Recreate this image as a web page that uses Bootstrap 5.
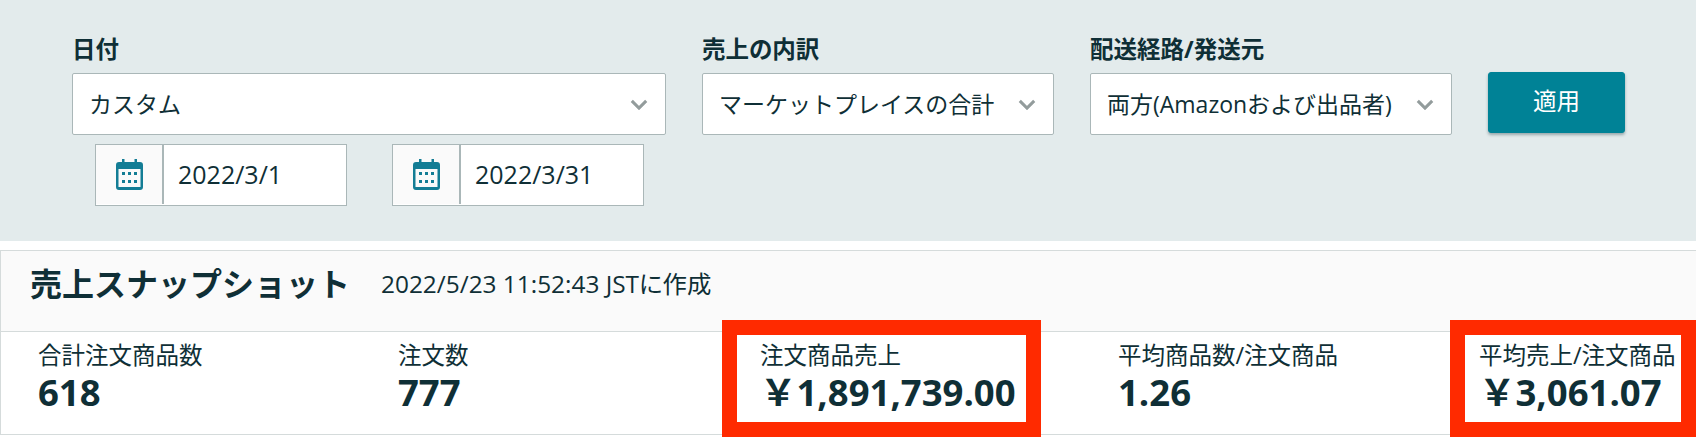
<!DOCTYPE html>
<html lang="ja">
<head>
<meta charset="utf-8">
<title>売上スナップショット</title>
<link href="https://cdn.jsdelivr.net/npm/bootstrap@5.3.0/dist/css/bootstrap.min.css" rel="stylesheet">
<style>
html,body{height:440px;overflow:hidden;background:#fff}
body{font-family:"Open Sans","Noto Sans CJK JP",sans-serif;color:#0f2f36;font-feature-settings:"palt"}
.filter-panel{height:241px;background:#e3ebec;padding:35px 0 0 72px;gap:36px}
.filter-label{display:block;font-size:23.5px;line-height:28px;font-weight:700;margin:0 0 10px;color:#0f2f36}
.filter-date{width:594px}
.filter-sales{width:352px}
.filter-route{width:362px}
.pick{height:62px;font-size:23px;line-height:28px;color:#0f2f36;border:1px solid #aab7b8;border-radius:2px;padding:16px 40px 16px 16px;background-color:#fff;background-size:18px 11px;background-position:right 17px center;background-image:url("data:image/svg+xml,%3Csvg xmlns='http://www.w3.org/2000/svg' viewBox='0 0 20 12'%3E%3Cpath d='M2 2l8 8 8-8' fill='none' stroke='%23939c9c' stroke-width='3.400'/%3E%3C/svg%3E");font-family:inherit;box-shadow:none;white-space:nowrap;overflow:hidden}
.date-row{margin-top:9px;padding-left:23px;gap:45px}
.date-box{height:62px;background:#fff;border:1px solid #aab7b8;flex-wrap:nowrap}
.date-a{width:252px}
.date-b{width:252px}
.date-icon{width:68px;background:#fafafa;border-right:2px solid #aab7b8;margin-bottom:1px}
.date-text{font-size:25px;padding-left:15px}
.apply-btn{width:137px;height:61px;margin-top:37px;margin-left:0;background:#008296;border:1px solid #008296;color:#fff;font-size:23.5px;border-radius:3px;padding-top:4px;box-shadow:0 2px 3px rgba(15,47,54,.35)}
.snap-card{margin-top:9px;height:185px;border:0;border-top:1px solid #d5dbdb;border-bottom:1px solid #d5dbdb;border-left:1px solid #d5dbdb;border-radius:0}
.snap-head{height:81px;background:#fafafa;border-bottom:1px solid #d5dbdb;padding:0 0 14px 29px;gap:31px}
.snap-title{font-size:32px;font-weight:700;margin:0;line-height:40px;color:#0f2f36;font-feature-settings:normal}
.snap-time{font-size:24.4px;line-height:30px}
.snap-stats{padding:7px 0 0 37px;display:grid;grid-template-columns:360px 362px 358px 361px 240px}
.stat-cell{position:relative}
.stat-name{font-size:23.5px;line-height:32px;white-space:nowrap}
.stat-num{font-size:36.5px;line-height:43px;font-weight:700;white-space:nowrap;font-feature-settings:normal}
.red-frame{position:absolute;border:15px solid #ff2a00;top:-19px}
.frame-a{left:-38px;width:319px;height:117px}
.frame-b{left:-29px;width:246px;height:117px}
</style>
</head>
<body>
<section class="filter-panel d-flex align-items-start">
  <div class="filter-date">
    <label class="filter-label">日付</label>
    <select class="form-select pick"><option>カスタム</option></select>
    <div class="d-flex date-row">
      <div class="input-group date-box date-a">
        <span class="date-icon d-flex align-items-center justify-content-center">
          <svg width="27" height="31" viewBox="0 0 27 31"><path fill="#137d95" fill-rule="evenodd" d="M6 0h2.500v3h10V0H21v3h3a3 3 0 0 1 3 3v22a3 3 0 0 1-3 3H3a3 3 0 0 1-3-3V6a3 3 0 0 1 3-3h3zM2.500 10v18h22V10z"/><path fill="#137d95" d="M6 13h3v3H6zm6 0h3v3h-3zm6 0h3v3h-3zM6 21h3v3H6zm6 0h3v3h-3zm6 0h3v3h-3z"/></svg>
        </span>
        <span class="date-text d-flex align-items-center">2022/3/1</span>
      </div>
      <div class="input-group date-box date-b">
        <span class="date-icon d-flex align-items-center justify-content-center">
          <svg width="27" height="31" viewBox="0 0 27 31"><path fill="#137d95" fill-rule="evenodd" d="M6 0h2.500v3h10V0H21v3h3a3 3 0 0 1 3 3v22a3 3 0 0 1-3 3H3a3 3 0 0 1-3-3V6a3 3 0 0 1 3-3h3zM2.500 10v18h22V10z"/><path fill="#137d95" d="M6 13h3v3H6zm6 0h3v3h-3zm6 0h3v3h-3zM6 21h3v3H6zm6 0h3v3h-3zm6 0h3v3h-3z"/></svg>
        </span>
        <span class="date-text d-flex align-items-center">2022/3/31</span>
      </div>
    </div>
  </div>
  <div class="filter-sales">
    <label class="filter-label">売上の内訳</label>
    <select class="form-select pick"><option>マーケットプレイスの合計</option></select>
  </div>
  <div class="filter-route">
    <label class="filter-label">配送経路/発送元</label>
    <select class="form-select pick"><option>両方(Amazonおよび出品者)</option></select>
  </div>
  <button type="button" class="btn apply-btn">適用</button>
</section>
<section class="card snap-card">
  <div class="snap-head d-flex align-items-center">
    <h2 class="snap-title">売上スナップショット</h2>
    <span class="snap-time">2022/5/23 11:52:43 JSTに作成</span>
  </div>
  <div class="snap-stats">
    <div class="stat-cell"><div class="stat-name">合計注文商品数</div><div class="stat-num">618</div></div>
    <div class="stat-cell"><div class="stat-name">注文数</div><div class="stat-num">777</div></div>
    <div class="stat-cell"><div class="stat-name">注文商品売上</div><div class="stat-num">￥1,891,739.00</div><div class="red-frame frame-a"></div></div>
    <div class="stat-cell"><div class="stat-name">平均商品数/注文商品</div><div class="stat-num">1.26</div></div>
    <div class="stat-cell"><div class="stat-name">平均売上/注文商品</div><div class="stat-num">￥3,061.07</div><div class="red-frame frame-b"></div></div>
  </div>
</section>
<script src="https://cdn.jsdelivr.net/npm/bootstrap@5.3.0/dist/js/bootstrap.bundle.min.js"></script>
</body>
</html>
